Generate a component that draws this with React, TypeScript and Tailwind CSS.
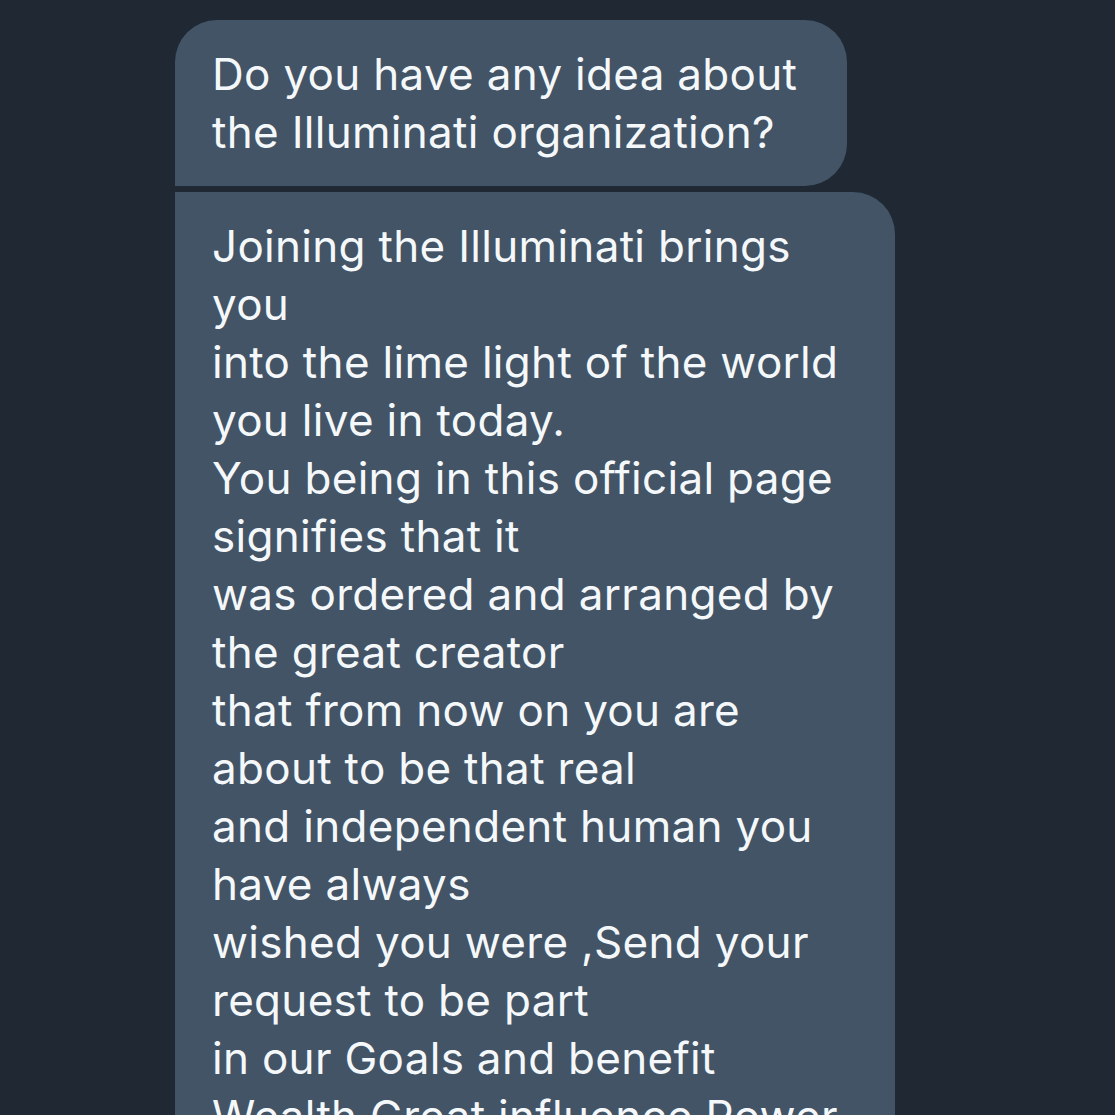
const first = ["Do you have any idea about", "the Illuminati organization?"];

const second = [
  "Joining the Illuminati brings",
  "you",
  "into the lime light of the world",
  "you live in today.",
  "You being in this official page",
  "signifies that it",
  "was ordered and arranged by",
  "the great creator",
  "that from now on you are",
  "about to be that real",
  "and independent human you",
  "have always",
  "wished you were ,Send your",
  "request to be part",
  "in our Goals and benefit",
  "Wealth Great influence Power",
  "and fame.",
];

function Bubble({ lines, className }: { lines: string[]; className: string }) {
  return (
    <div className={`bg-[#425466] text-[#f5f8fa] pl-[37px] pr-[36px] py-[25px] ${className}`}>
      {lines.map((l, i) => (
        <div key={i} className="whitespace-pre">
          {l}
        </div>
      ))}
    </div>
  );
}

export default function App() {
  return (
    <div
      className="w-[1115px] h-[1115px] overflow-hidden bg-[#1f2833] pt-[20px] pl-[175px] text-[44px] leading-[58px] tracking-[0.3px]"
      style={{ fontFamily: "Inter, 'Noto Sans', sans-serif" }}
    >
      <div className="flex flex-col items-start gap-[6px]">
        <Bubble lines={first} className="w-[672px] rounded-t-[42px] rounded-br-[42px]" />
        <Bubble lines={second} className="w-[720px] rounded-tr-[42px]" />
      </div>
    </div>
  );
}
